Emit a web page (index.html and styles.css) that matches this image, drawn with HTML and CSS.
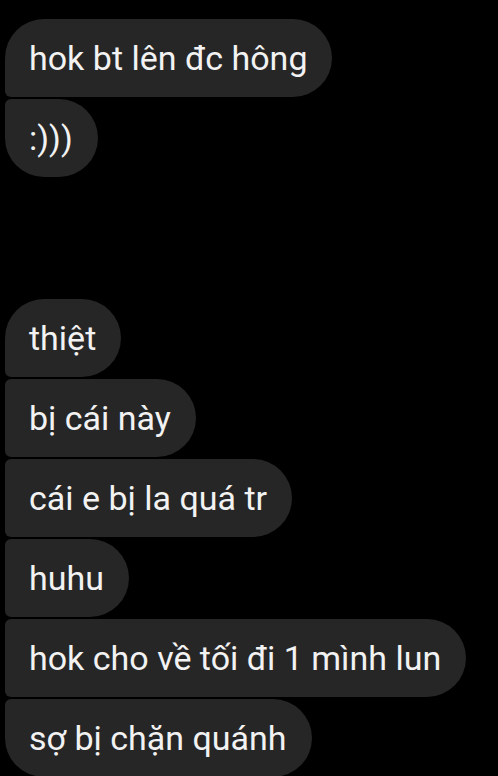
FILE: index.html
```html
<!DOCTYPE html>
<html lang="vi">
<head>
    <meta charset="UTF-8">
    <meta name="viewport" content="width=device-width, initial-scale=1.0">
    <title>Tin nhắn</title>
    <link rel="stylesheet" href="styles.css">
</head>
<body>
    <div class="thread">
        <div class="group">
            <div class="bubble">hok bt lên đc hông</div>
            <div class="bubble">:)))</div>
        </div>
        <div class="group">
            <div class="bubble">thiệt</div>
            <div class="bubble">bị cái này</div>
            <div class="bubble">cái e bị la quá tr</div>
            <div class="bubble">huhu</div>
            <div class="bubble">hok cho về tối đi 1 mình lun</div>
            <div class="bubble">sợ bị chặn quánh</div>
        </div>
    </div>
</body>
</html>
```

FILE: styles.css
```css
* {
    margin: 0;
    padding: 0;
    box-sizing: border-box;
}

body {
    background: #000;
    font-family: Roboto, 'Noto Sans', sans-serif;
    overflow: hidden;
}

.thread {
    display: flex;
    flex-direction: column;
    gap: 122px;
    padding: 19px 0 0 5px;
}

.group {
    display: flex;
    flex-direction: column;
    align-items: flex-start;
    gap: 2px;
}

.bubble {
    background: #262626;
    color: #f2f2f2;
    font-size: 34px;
    line-height: 44px;
    padding: 17px 25px 17px 24px;
    border-radius: 6px 39px 39px 6px;
    white-space: nowrap;
}

/* first and last message of a group get the round outer corner */
.bubble:first-child {
    border-top-left-radius: 39px;
}

.bubble:last-child {
    border-bottom-left-radius: 39px;
}
```
